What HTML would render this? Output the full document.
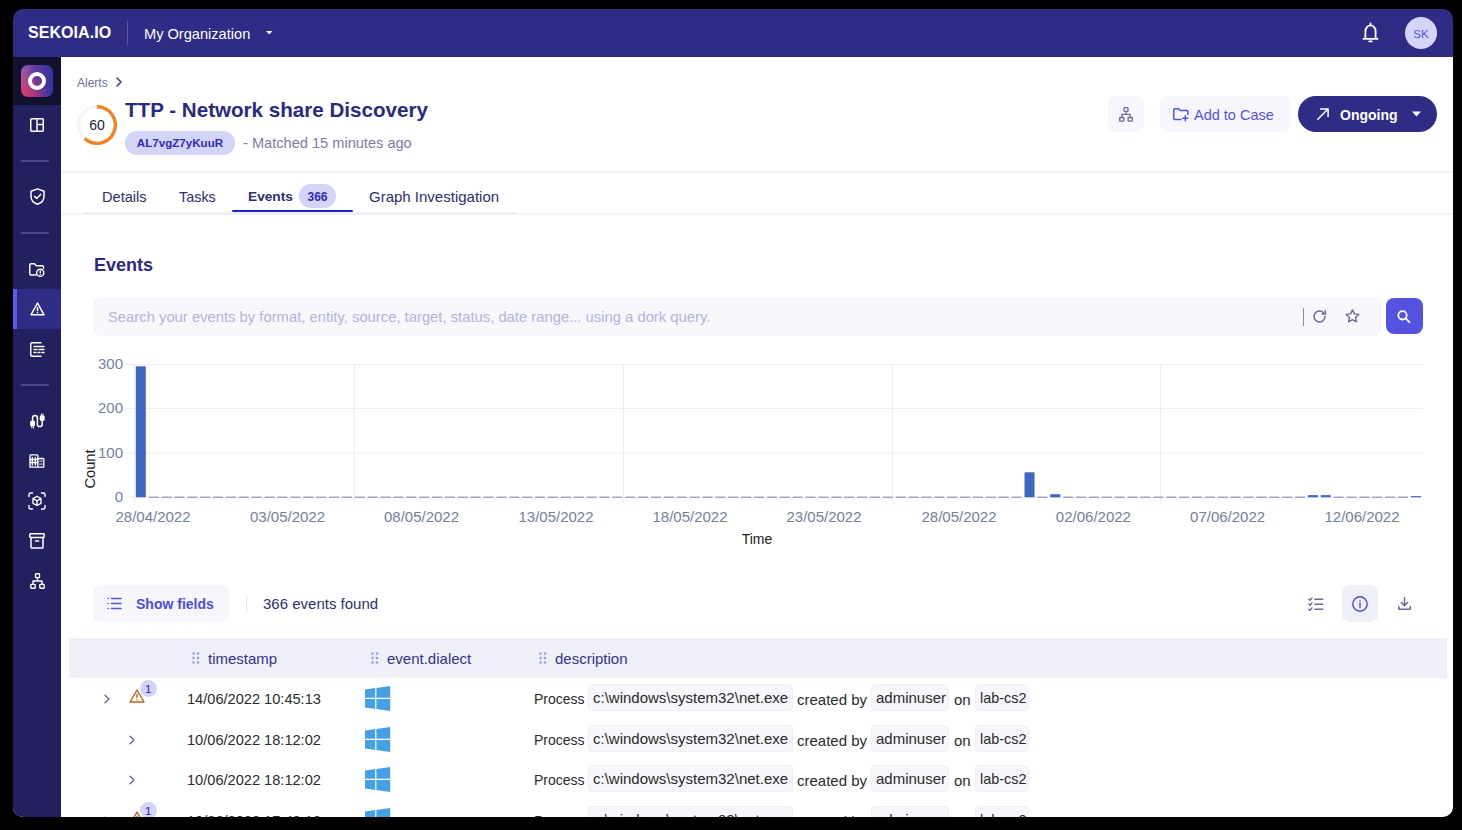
<!DOCTYPE html>
<html><head><meta charset="utf-8">
<style>
*{box-sizing:border-box;margin:0;padding:0}
html,body{width:1462px;height:830px;overflow:hidden;background:#000;font-family:"Liberation Sans",sans-serif}
.win{position:absolute;left:0;top:0;width:1462px;height:830px;background:transparent;clip-path:inset(9px 9px 13px 13px round 10px)}
.a{position:absolute}
.t{position:absolute;white-space:nowrap;line-height:1}
svg.i{position:absolute;overflow:visible;fill:none;stroke-linecap:round;stroke-linejoin:round}
.chip{position:absolute;height:27px;background:#f6f6fb;border:1px solid #efeff6;border-radius:4px;font-size:15px;color:#2a2a2a;line-height:26px;padding:0 4px;white-space:nowrap}
.rt{position:absolute;font-size:14px;color:#2b2b2b;white-space:nowrap;line-height:1}
</style></head><body>
<div class="win">
  <!-- top bar -->
  <div class="a" style="left:0;top:57px;width:1462px;height:773px;background:#fff"></div>
  <div class="a" style="left:0;top:0;width:1462px;height:57px;background:#2e2c84"></div>
  <div class="t" style="left:28px;top:25px;font-size:16px;font-weight:bold;color:#fff;letter-spacing:0.05px">SEKOIA.IO</div>
  <div class="a" style="left:127px;top:21px;width:1px;height:24px;background:#5a58a0"></div>
  <div class="t" style="left:144px;top:26.5px;font-size:14.6px;color:#fff">My Organization</div>
  <svg class="i" style="left:265.5px;top:31px" width="7" height="4"><path d="M0 0H6.5L3.25 3.6Z" style="fill:#fff;stroke:none"/></svg>
  <!-- bell -->
  <svg class="i" style="left:1362px;top:22px" width="17" height="21" stroke="#fff" stroke-width="1.6">
    <path d="M8.5 1.4V2.8M3.4 15.8V9.3C3.4 6 5.7 3.4 8.5 3.4S13.6 6 13.6 9.3V15.8M1.4 16.8H15.6M7.2 19.4H9.8" stroke-width="1.8"/>
  </svg>
  <div class="a" style="left:1405px;top:17px;width:32px;height:32px;border-radius:50%;background:#d4d4f7"></div>
  <div class="t" style="left:1405px;top:28px;width:32px;text-align:center;font-size:11.6px;color:#5452e0">SK</div>
  <!-- SIDEBAR -->
  <div class="a" style="left:0;top:57px;width:61px;height:773px;background:#22205f"></div>
  <div class="a" style="left:0;top:57px;width:61px;height:48px;background:#12112f"></div>
  <div class="a" style="left:21px;top:65px;width:32px;height:32px;border-radius:7px;background:radial-gradient(circle at 0% 100%,rgba(222,52,100,1) 0%,rgba(222,52,100,0) 62%),linear-gradient(90deg,#9c60b0 0%,#5e3a9a 45%,#3232a2 100%)"></div>
  <div class="a" style="left:28px;top:72px;width:18px;height:18px;border-radius:50%;border:4.3px solid #fff"></div>
  <div class="a" style="left:13px;top:289px;width:48px;height:40px;background:#2e2c84"></div>
  <div class="a" style="left:13px;top:289px;width:4px;height:40px;background:#5b5bf0"></div>
  <div class="a" style="left:21px;top:160px;width:28px;height:2px;background:#4a4886"></div>
  <div class="a" style="left:21px;top:232px;width:28px;height:2px;background:#4a4886"></div>
  <div class="a" style="left:21px;top:384px;width:28px;height:2px;background:#4a4886"></div>
  <!-- dashboard -->
  <svg class="i" style="left:30px;top:118px" width="14" height="14" stroke="#fff" stroke-width="1.5"><rect x="0.75" y="0.75" width="12.5" height="12.5" rx="1"/><path d="M7 0.75V13.25M7 6.5H13.25"/></svg>
  <!-- shield -->
  <svg class="i" style="left:30px;top:188px" width="15" height="17" stroke="#fff" stroke-width="1.5"><path d="M7.5 0.9L1 3.3V8.2C1 12 3.8 15 7.5 16.2C11.2 15 14 12 14 8.2V3.3Z"/><path d="M4.6 8.4L6.7 10.5L10.6 6.4"/></svg>
  <!-- folder alert -->
  <svg class="i" style="left:29px;top:263px" width="16" height="14" stroke="#fff" stroke-width="1.4"><path d="M7 12H1.8C1.2 12 0.8 11.6 0.8 11V1.8C0.8 1.2 1.2 0.8 1.8 0.8H5.5L7.2 2.7H13.5C14.1 2.7 14.5 3.1 14.5 3.7V5.5"/><circle cx="11.2" cy="9.8" r="3.6"/><path d="M11.2 8V9.8M11.2 11.5V11.6"/></svg>
  <!-- alert triangle -->
  <svg class="i" style="left:30px;top:302px" width="15" height="14" stroke="#fff" stroke-width="1.5"><path d="M7.5 1L14 12.8H1Z"/><path d="M7.5 5.5V8.5M7.5 10.6V10.7"/></svg>
  <!-- report -->
  <svg class="i" style="left:30px;top:342px" width="15" height="15" stroke="#fff" stroke-width="1.4"><path d="M11 0.8H1.8C1.2 0.8 0.8 1.2 0.8 1.8V13.2C0.8 13.8 1.2 14.2 1.8 14.2H11"/><path d="M4 4.5H14M4 7.5H7M9 7.5H14M4 10.5H6M8 10.5H10M12 10.5H14"/></svg>
  <!-- plug -->
  <svg class="i" style="left:30px;top:413px" width="15" height="16" stroke="#fff" stroke-width="1.5"><path d="M2.6 9V4.8A2.4 2.4 0 0 1 7.4 4.8V11.2A2.4 2.4 0 0 0 12.2 11.2V7"/><rect x="0.9" y="8.6" width="3.4" height="4" rx="0.4" style="fill:#fff"/><rect x="10.5" y="3.2" width="3.4" height="4" rx="0.4" style="fill:#fff"/><path d="M1.8 12.8V15M3.4 12.8V15M11.4 1V3.2M13 1V3.2" stroke-width="1"/></svg>
  <!-- building -->
  <svg class="i" style="left:29px;top:454px" width="16" height="14" stroke="#fff" stroke-width="1.3"><path d="M1 13.2V1.5C1 1 1.3 0.8 1.8 0.8H8C8.5 0.8 8.8 1 8.8 1.5V13.2M8.8 4.5H14C14.5 4.5 14.8 4.8 14.8 5.3V13.2H1"/><path d="M3.3 3.5V11M6.3 3.5V11M1 5.5H8.8M1 8.5H8.8M11 7V7.2M12.8 7V7.2M11 10V10.2M12.8 10V10.2"/></svg>
  <!-- cube scan -->
  <svg class="i" style="left:28px;top:492px" width="18" height="18" stroke="#fff" stroke-width="1.4"><path d="M1 4.5V2.5C1 1.6 1.6 1 2.5 1H4.5M13.5 1H15.5C16.4 1 17 1.6 17 2.5V4.5M17 13.5V15.5C17 16.4 16.4 17 15.5 17H13.5M4.5 17H2.5C1.6 17 1 16.4 1 15.5V13.5"/><path d="M9 4.3L13 6.5V11.3L9 13.5L5 11.3V6.5Z M5 6.5L9 8.8L13 6.5M9 8.8V13.5"/></svg>
  <!-- archive -->
  <svg class="i" style="left:29px;top:533px" width="16" height="16" stroke="#fff" stroke-width="1.5"><rect x="0.8" y="0.8" width="14.4" height="3.6" rx="0.8"/><path d="M2 4.4V14.2C2 14.7 2.3 15 2.8 15H13.2C13.7 15 14 14.7 14 14.2V4.4M6.5 8H9.5"/></svg>
  <!-- hierarchy -->
  <svg class="i" style="left:30px;top:573px" width="15" height="16" stroke="#fff" stroke-width="1.4"><rect x="5.5" y="0.8" width="4" height="3.8" rx="0.6"/><rect x="0.8" y="11.4" width="4.4" height="3.8" rx="0.6"/><rect x="9.8" y="11.4" width="4.4" height="3.8" rx="0.6"/><path d="M7.5 4.6V8M3 11.4V8H12V11.4"/></svg>
  <!-- HEADER -->
  <div class="t" style="left:77px;top:77px;font-size:12px;color:#6e6e9c">Alerts</div>
  <svg class="i" style="left:116px;top:77px" width="6" height="10" stroke="#3a3a7a" stroke-width="1.5"><path d="M1 1L5 5L1 9"/></svg>
  <svg class="i" style="left:77px;top:105px" width="40" height="40">
    <circle cx="20" cy="20" r="18.3" stroke="#f4f4fa" stroke-width="3.2"/>
    <path d="M20 1.7A18.3 18.3 0 1 1 7.76 33.6" stroke="#f5821f" stroke-width="3.4" stroke-linecap="butt"/>
  </svg>
  <div class="t" style="left:77px;top:118px;width:40px;text-align:center;font-size:14px;color:#1a1a3a">60</div>
  <div class="t" style="left:125px;top:100px;font-size:20.6px;font-weight:bold;color:#2b2a82">TTP - Network share Discovery</div>
  <div class="a" style="left:125px;top:131px;width:110px;height:24px;border-radius:12px;background:#d4d4f7"></div>
  <div class="t" style="left:125px;top:137px;width:110px;text-align:center;font-size:11.6px;color:#2d2db5;font-weight:bold">AL7vgZ7yKuuR</div>
  <div class="t" style="left:243px;top:136px;font-size:14.6px;color:#7c7ca6">- Matched 15 minutes ago</div>
  <!-- buttons -->
  <div class="a" style="left:1108px;top:96px;width:36px;height:36px;border-radius:8px;background:#f6f6fc"></div>
  <svg class="i" style="left:1119px;top:107px" width="14" height="16" stroke="#6b6b9a" stroke-width="1.3"><rect x="5" y="0.7" width="4" height="3.6" rx="0.6"/><rect x="0.7" y="10.5" width="4.2" height="3.6" rx="0.6"/><rect x="9.1" y="10.5" width="4.2" height="3.6" rx="0.6"/><path d="M7 4.3V7.4M2.8 10.5V7.4H11.2V10.5"/></svg>
  <div class="a" style="left:1160px;top:96px;width:130px;height:36px;border-radius:8px;background:#f6f6fc"></div>
  <svg class="i" style="left:1173px;top:108px" width="16" height="13" stroke="#5452e0" stroke-width="1.5"><path d="M8 11.5H1.8C1.2 11.5 0.8 11.1 0.8 10.5V1.6C0.8 1.1 1.2 0.8 1.6 0.8H5.6L7.2 2.6H14C14.6 2.6 14.9 3 14.9 3.5V6.5"/><path d="M12.3 7.8V12.8M9.8 10.3H14.8"/></svg>
  <div class="t" style="left:1194px;top:107.5px;font-size:14.5px;color:#5452e0">Add to Case</div>
  <div class="a" style="left:1298px;top:96px;width:139px;height:36px;border-radius:18px;background:#2e2c84"></div>
  <svg class="i" style="left:1317px;top:108px" width="12" height="12" stroke="#fff" stroke-width="1.5"><path d="M0.8 11.2L11 1M3.5 0.9H11.1V8.5"/></svg>
  <div class="t" style="left:1340px;top:108px;font-size:14px;color:#fff;font-weight:bold">Ongoing</div>
  <svg class="i" style="left:1412px;top:111px" width="9" height="6"><path d="M0 0.5H9L4.5 5.5Z" fill="#fff" stroke="none"/></svg>
  <div class="a" style="left:61px;top:171px;width:1392px;height:2px;background:#f3f3f9"></div>
  <!-- tabs band -->
  <div class="a" style="left:61px;top:173px;width:1392px;height:40px;background:#fff"></div>
  <div class="a" style="left:61px;top:213px;width:1392px;height:2px;background:#f3f3f9"></div>
  <div class="a" style="left:85px;top:212px;width:430px;height:2px;background:#eeeef7"></div>
  <div class="t" style="left:102px;top:190px;font-size:14.6px;color:#2e2e6e">Details</div>
  <div class="t" style="left:179px;top:190px;font-size:14.4px;color:#2e2e6e">Tasks</div>
  <div class="t" style="left:248px;top:190px;font-size:13.7px;color:#2e2e6e;font-weight:bold">Events</div>
  <div class="a" style="left:299px;top:184px;width:37px;height:24px;border-radius:12px;background:#d4d4f7"></div>
  <div class="t" style="left:299px;top:191px;width:37px;text-align:center;font-size:12px;color:#2d2db5;font-weight:bold">366</div>
  <div class="a" style="left:232px;top:210px;width:121px;height:2.3px;border-radius:1px;background:#2222cc"></div>
  <div class="t" style="left:369px;top:189px;font-size:15px;color:#2e2e6e">Graph Investigation</div>
  <!-- events heading -->
  <div class="t" style="left:94px;top:256px;font-size:18px;font-weight:bold;color:#2b2a80">Events</div>
  <!-- search -->
  <div class="a" style="left:93px;top:297px;width:1289px;height:39px;border-radius:8px;background:#f7f7fc"></div>
  <div class="t" style="left:108px;top:310px;font-size:14.8px;color:#b4b4dc">Search your events by format, entity, source, target, status, date range... using a dork query.</div>
  <div class="a" style="left:1303px;top:308px;width:1px;height:18px;background:#8a8ab0"></div>
  <svg class="i" style="left:1313px;top:310px" width="14" height="13" stroke="#6b6b9a" stroke-width="1.5"><path d="M12 6.5A5.5 5.5 0 1 1 10.4 2.6"/><path d="M12.3 0.8V4H9.1" /></svg>
  <svg class="i" style="left:1345px;top:309px" width="15" height="14" stroke="#6b6b9a" stroke-width="1.4"><path d="M7.5 0.9L9.4 4.9L13.8 5.4L10.5 8.4L11.4 12.8L7.5 10.6L3.6 12.8L4.5 8.4L1.2 5.4L5.6 4.9Z"/></svg>
  <div class="a" style="left:1386px;top:298px;width:37px;height:36px;border-radius:8px;background:#5452e0"></div>
  <svg class="i" style="left:1397px;top:310px" width="14" height="13" stroke="#fff" stroke-width="1.8"><circle cx="5.5" cy="5.3" r="4.2"/><path d="M8.6 8.4L12.5 12.2"/></svg>
  <!-- CHART -->
  <svg class="i" style="left:0;top:0" width="1462" height="830">
    <g stroke="#ececf2" stroke-width="1" stroke-linecap="butt">
      <path d="M126 364.5H1422.5M126 408.5H1422.5M126 453H1422.5M126 497.2H1422.5"/>
      <path d="M134.5 364V505M354.5 364V505M623.5 364V505M892.5 364V505M1160.5 364V505"/>
    </g>
    <rect x="135.80" y="366.30" width="10" height="131.00" fill="#3e67c4"/>
<rect x="148.68" y="496.6" width="10" height="1.3" fill="#9e9ab6"/>
<rect x="161.56" y="496.6" width="10" height="1.3" fill="#9e9ab6"/>
<rect x="174.44" y="496.6" width="10" height="1.3" fill="#9e9ab6"/>
<rect x="187.32" y="496.6" width="10" height="1.3" fill="#9e9ab6"/>
<rect x="200.20" y="496.6" width="10" height="1.3" fill="#9e9ab6"/>
<rect x="213.08" y="496.6" width="10" height="1.3" fill="#9e9ab6"/>
<rect x="225.96" y="496.6" width="10" height="1.3" fill="#9e9ab6"/>
<rect x="238.84" y="496.6" width="10" height="1.3" fill="#9e9ab6"/>
<rect x="251.72" y="496.6" width="10" height="1.3" fill="#9e9ab6"/>
<rect x="264.60" y="496.6" width="10" height="1.3" fill="#9e9ab6"/>
<rect x="277.48" y="496.6" width="10" height="1.3" fill="#9e9ab6"/>
<rect x="290.36" y="496.6" width="10" height="1.3" fill="#9e9ab6"/>
<rect x="303.24" y="496.6" width="10" height="1.3" fill="#9e9ab6"/>
<rect x="316.12" y="496.6" width="10" height="1.3" fill="#9e9ab6"/>
<rect x="329.00" y="496.6" width="10" height="1.3" fill="#9e9ab6"/>
<rect x="341.88" y="496.6" width="10" height="1.3" fill="#9e9ab6"/>
<rect x="354.76" y="496.6" width="10" height="1.3" fill="#9e9ab6"/>
<rect x="367.64" y="496.6" width="10" height="1.3" fill="#9e9ab6"/>
<rect x="380.52" y="496.6" width="10" height="1.3" fill="#9e9ab6"/>
<rect x="393.40" y="496.6" width="10" height="1.3" fill="#9e9ab6"/>
<rect x="406.28" y="496.6" width="10" height="1.3" fill="#9e9ab6"/>
<rect x="419.16" y="496.6" width="10" height="1.3" fill="#9e9ab6"/>
<rect x="432.04" y="496.6" width="10" height="1.3" fill="#9e9ab6"/>
<rect x="444.92" y="496.6" width="10" height="1.3" fill="#9e9ab6"/>
<rect x="457.80" y="496.6" width="10" height="1.3" fill="#9e9ab6"/>
<rect x="470.68" y="496.6" width="10" height="1.3" fill="#9e9ab6"/>
<rect x="483.56" y="496.6" width="10" height="1.3" fill="#9e9ab6"/>
<rect x="496.44" y="496.6" width="10" height="1.3" fill="#9e9ab6"/>
<rect x="509.32" y="496.6" width="10" height="1.3" fill="#9e9ab6"/>
<rect x="522.20" y="496.6" width="10" height="1.3" fill="#9e9ab6"/>
<rect x="535.08" y="496.6" width="10" height="1.3" fill="#9e9ab6"/>
<rect x="547.96" y="496.6" width="10" height="1.3" fill="#9e9ab6"/>
<rect x="560.84" y="496.6" width="10" height="1.3" fill="#9e9ab6"/>
<rect x="573.72" y="496.6" width="10" height="1.3" fill="#9e9ab6"/>
<rect x="586.60" y="496.6" width="10" height="1.3" fill="#9e9ab6"/>
<rect x="599.48" y="496.6" width="10" height="1.3" fill="#9e9ab6"/>
<rect x="612.36" y="496.6" width="10" height="1.3" fill="#9e9ab6"/>
<rect x="625.24" y="496.6" width="10" height="1.3" fill="#9e9ab6"/>
<rect x="638.12" y="496.6" width="10" height="1.3" fill="#9e9ab6"/>
<rect x="651.00" y="496.6" width="10" height="1.3" fill="#9e9ab6"/>
<rect x="663.88" y="496.6" width="10" height="1.3" fill="#9e9ab6"/>
<rect x="676.76" y="496.6" width="10" height="1.3" fill="#9e9ab6"/>
<rect x="689.64" y="496.6" width="10" height="1.3" fill="#9e9ab6"/>
<rect x="702.52" y="496.6" width="10" height="1.3" fill="#9e9ab6"/>
<rect x="715.40" y="496.6" width="10" height="1.3" fill="#9e9ab6"/>
<rect x="728.28" y="496.6" width="10" height="1.3" fill="#9e9ab6"/>
<rect x="741.16" y="496.6" width="10" height="1.3" fill="#9e9ab6"/>
<rect x="754.04" y="496.6" width="10" height="1.3" fill="#9e9ab6"/>
<rect x="766.92" y="496.6" width="10" height="1.3" fill="#9e9ab6"/>
<rect x="779.80" y="496.6" width="10" height="1.3" fill="#9e9ab6"/>
<rect x="792.68" y="496.6" width="10" height="1.3" fill="#9e9ab6"/>
<rect x="805.56" y="496.6" width="10" height="1.3" fill="#9e9ab6"/>
<rect x="818.44" y="496.6" width="10" height="1.3" fill="#9e9ab6"/>
<rect x="831.32" y="496.6" width="10" height="1.3" fill="#9e9ab6"/>
<rect x="844.20" y="496.6" width="10" height="1.3" fill="#9e9ab6"/>
<rect x="857.08" y="496.6" width="10" height="1.3" fill="#9e9ab6"/>
<rect x="869.96" y="496.6" width="10" height="1.3" fill="#9e9ab6"/>
<rect x="882.84" y="496.6" width="10" height="1.3" fill="#9e9ab6"/>
<rect x="895.72" y="496.6" width="10" height="1.3" fill="#9e9ab6"/>
<rect x="908.60" y="496.6" width="10" height="1.3" fill="#9e9ab6"/>
<rect x="921.48" y="496.6" width="10" height="1.3" fill="#9e9ab6"/>
<rect x="934.36" y="496.6" width="10" height="1.3" fill="#9e9ab6"/>
<rect x="947.24" y="496.6" width="10" height="1.3" fill="#9e9ab6"/>
<rect x="960.12" y="496.6" width="10" height="1.3" fill="#9e9ab6"/>
<rect x="973.00" y="496.6" width="10" height="1.3" fill="#9e9ab6"/>
<rect x="985.88" y="496.6" width="10" height="1.3" fill="#9e9ab6"/>
<rect x="998.76" y="496.6" width="10" height="1.3" fill="#9e9ab6"/>
<rect x="1011.64" y="496.6" width="10" height="1.3" fill="#9e9ab6"/>
<rect x="1024.52" y="472.30" width="10" height="25.00" fill="#3e67c4"/>
<rect x="1037.40" y="496.6" width="10" height="1.3" fill="#9e9ab6"/>
<rect x="1050.28" y="494.20" width="10" height="3.10" fill="#3e67c4"/>
<rect x="1063.16" y="496.6" width="10" height="1.3" fill="#9e9ab6"/>
<rect x="1076.04" y="496.6" width="10" height="1.3" fill="#9e9ab6"/>
<rect x="1088.92" y="496.6" width="10" height="1.3" fill="#9e9ab6"/>
<rect x="1101.80" y="496.6" width="10" height="1.3" fill="#9e9ab6"/>
<rect x="1114.68" y="496.6" width="10" height="1.3" fill="#9e9ab6"/>
<rect x="1127.56" y="496.6" width="10" height="1.3" fill="#9e9ab6"/>
<rect x="1140.44" y="496.6" width="10" height="1.3" fill="#9e9ab6"/>
<rect x="1153.32" y="496.6" width="10" height="1.3" fill="#9e9ab6"/>
<rect x="1166.20" y="496.6" width="10" height="1.3" fill="#9e9ab6"/>
<rect x="1179.08" y="496.6" width="10" height="1.3" fill="#9e9ab6"/>
<rect x="1191.96" y="496.6" width="10" height="1.3" fill="#9e9ab6"/>
<rect x="1204.84" y="496.6" width="10" height="1.3" fill="#9e9ab6"/>
<rect x="1217.72" y="496.6" width="10" height="1.3" fill="#9e9ab6"/>
<rect x="1230.60" y="496.6" width="10" height="1.3" fill="#9e9ab6"/>
<rect x="1243.48" y="496.6" width="10" height="1.3" fill="#9e9ab6"/>
<rect x="1256.36" y="496.6" width="10" height="1.3" fill="#9e9ab6"/>
<rect x="1269.24" y="496.6" width="10" height="1.3" fill="#9e9ab6"/>
<rect x="1282.12" y="496.6" width="10" height="1.3" fill="#9e9ab6"/>
<rect x="1295.00" y="496.6" width="10" height="1.3" fill="#9e9ab6"/>
<rect x="1307.88" y="495.10" width="10" height="2.20" fill="#3e67c4"/>
<rect x="1320.76" y="495.10" width="10" height="2.20" fill="#3e67c4"/>
<rect x="1333.64" y="496.6" width="10" height="1.3" fill="#9e9ab6"/>
<rect x="1346.52" y="496.6" width="10" height="1.3" fill="#9e9ab6"/>
<rect x="1359.40" y="496.6" width="10" height="1.3" fill="#9e9ab6"/>
<rect x="1372.28" y="496.6" width="10" height="1.3" fill="#9e9ab6"/>
<rect x="1385.16" y="496.6" width="10" height="1.3" fill="#9e9ab6"/>
<rect x="1398.04" y="496.6" width="10" height="1.3" fill="#9e9ab6"/>
<rect x="1410.92" y="496.10" width="10" height="1.20" fill="#3e67c4"/>
  </svg>
  <div class="t" style="left:86px;top:355.5px;width:37px;text-align:right;font-size:15px;color:#76819f">300</div>
  <div class="t" style="left:86px;top:399.5px;width:37px;text-align:right;font-size:15px;color:#76819f">200</div>
  <div class="t" style="left:86px;top:444.5px;width:37px;text-align:right;font-size:15px;color:#76819f">100</div>
  <div class="t" style="left:86px;top:488.5px;width:37px;text-align:right;font-size:15px;color:#76819f">0</div>
  <div class="t" style="left:60px;top:462px;width:60px;text-align:center;font-size:14.7px;color:#222;transform:rotate(-90deg);transform-origin:30px 7px">Count</div>
  <div class="t" style="left:707px;top:532px;width:100px;text-align:center;font-size:14px;color:#222">Time</div>
<div class="t" style="left:103px;top:508.5px;width:100px;text-align:center;font-size:15px;color:#74809e">28/04/2022</div>
<div class="t" style="left:237.5px;top:508.5px;width:100px;text-align:center;font-size:15px;color:#74809e">03/05/2022</div>
<div class="t" style="left:371.5px;top:508.5px;width:100px;text-align:center;font-size:15px;color:#74809e">08/05/2022</div>
<div class="t" style="left:506px;top:508.5px;width:100px;text-align:center;font-size:15px;color:#74809e">13/05/2022</div>
<div class="t" style="left:640px;top:508.5px;width:100px;text-align:center;font-size:15px;color:#74809e">18/05/2022</div>
<div class="t" style="left:774px;top:508.5px;width:100px;text-align:center;font-size:15px;color:#74809e">23/05/2022</div>
<div class="t" style="left:909px;top:508.5px;width:100px;text-align:center;font-size:15px;color:#74809e">28/05/2022</div>
<div class="t" style="left:1043.4px;top:508.5px;width:100px;text-align:center;font-size:15px;color:#74809e">02/06/2022</div>
<div class="t" style="left:1177.6px;top:508.5px;width:100px;text-align:center;font-size:15px;color:#74809e">07/06/2022</div>
<div class="t" style="left:1312px;top:508.5px;width:100px;text-align:center;font-size:15px;color:#74809e">12/06/2022</div>
  <!-- TOOLBAR -->
  <div class="a" style="left:93px;top:585px;width:136px;height:37px;border-radius:8px;background:#f6f6fc"></div>
  <svg class="i" style="left:107px;top:597px" width="15" height="13" stroke="#5452e0" stroke-width="1.5"><path d="M1 1.5H1.2M1 6.5H1.2M1 11.5H1.2M4.5 1.5H14M4.5 6.5H14M4.5 11.5H14"/></svg>
  <div class="t" style="left:136px;top:597px;font-size:14px;font-weight:bold;color:#4d4ddc">Show fields</div>
  <div class="a" style="left:246px;top:597px;width:1px;height:14px;background:#e2e2ee"></div>
  <div class="t" style="left:263px;top:596px;font-size:15px;color:#30306e">366 events found</div>
  <svg class="i" style="left:1308px;top:597px" width="16" height="14" stroke="#6b6b9a" stroke-width="1.4"><path d="M0.8 2.2L2 3.3L4 1M0.8 7.2L2 8.3L4 6M0.8 12.2L2 13.3L4 11M6.8 2.3H14.8M6.8 7.3H14.8M6.8 12.3H14.8"/></svg>
  <div class="a" style="left:1342px;top:585px;width:36px;height:37px;border-radius:8px;background:#efeff8"></div>
  <svg class="i" style="left:1352px;top:596px" width="16" height="16" stroke="#4b4be0" stroke-width="1.4"><circle cx="8" cy="8" r="7.2"/><path d="M8 7V11.5M8 4.6V4.8"/></svg>
  <svg class="i" style="left:1398px;top:597px" width="13" height="13" stroke="#6b6b9a" stroke-width="1.5"><path d="M6.5 0.8V8.5M3.3 5.5L6.5 8.6L9.7 5.5M0.8 9.5V12.2H12.2V9.5"/></svg>
  <!-- TABLE HEADER -->
  <div class="a" style="left:69px;top:638px;width:1378px;height:40px;background:#efeff8"></div>
  <svg class="i" style="left:192px;top:652px" width="8" height="12"><g style="fill:#9a9ade;stroke:none"><circle cx="1.5" cy="1.5" r="1.25"/><circle cx="1.5" cy="6" r="1.25"/><circle cx="1.5" cy="10.5" r="1.25"/><circle cx="6" cy="1.5" r="1.25"/><circle cx="6" cy="6" r="1.25"/><circle cx="6" cy="10.5" r="1.25"/></g></svg>
  <div class="t" style="left:208px;top:651px;font-size:15px;color:#34348a">timestamp</div>
  <svg class="i" style="left:371px;top:652px" width="8" height="12"><g style="fill:#9a9ade;stroke:none"><circle cx="1.5" cy="1.5" r="1.25"/><circle cx="1.5" cy="6" r="1.25"/><circle cx="1.5" cy="10.5" r="1.25"/><circle cx="6" cy="1.5" r="1.25"/><circle cx="6" cy="6" r="1.25"/><circle cx="6" cy="10.5" r="1.25"/></g></svg>
  <div class="t" style="left:387px;top:651px;font-size:15px;color:#34348a">event.dialect</div>
  <svg class="i" style="left:539px;top:652px" width="8" height="12"><g style="fill:#9a9ade;stroke:none"><circle cx="1.5" cy="1.5" r="1.25"/><circle cx="1.5" cy="6" r="1.25"/><circle cx="1.5" cy="10.5" r="1.25"/><circle cx="6" cy="1.5" r="1.25"/><circle cx="6" cy="6" r="1.25"/><circle cx="6" cy="10.5" r="1.25"/></g></svg>
  <div class="t" style="left:555px;top:651px;font-size:15px;color:#34348a">description</div>
  <svg class="i" style="left:104px;top:694px" width="6" height="10" stroke="#5d5da8" stroke-width="1.3"><path d="M1 1.2L5 5L1 8.8"/></svg>
  <svg class="i" style="left:129px;top:689px" width="16" height="14" stroke="#b5651d" stroke-width="1.4"><path d="M8 1L15 13H1Z"/><path d="M8 5.3V8.6M8 10.6V10.7"/></svg>
  <div class="a" style="left:139.5px;top:680px;width:17.5px;height:17px;border-radius:50%;background:#d4d4f7"></div>
  <div class="t" style="left:139.5px;top:684px;width:17.5px;text-align:center;font-size:11.5px;color:#2222c0">1</div>
  <div class="rt" style="left:187px;top:692px;font-size:14.6px">14/06/2022 10:45:13</div>
  <svg class="i" style="left:365px;top:686px" width="26" height="26"><path style="fill:#45a0e6;stroke:none" d="M0 3.5L10.2 2.1V11.8H0ZM11.4 1.9L25.2 0V11.8H11.4ZM0 13H10.2V22.9L0 21.5ZM11.4 13H25.2V25L11.4 23.1Z"/></svg>
  <div class="rt" style="left:534px;top:692px;font-size:14px">Process</div>
  <div class="chip" style="left:588px;top:684px;width:205px">c:\windows\system32\net.exe</div>
  <div class="rt" style="left:797px;top:692px;font-size:15px">created by</div>
  <div class="chip" style="left:871px;top:684px;width:78px">adminuser</div>
  <div class="rt" style="left:954px;top:692px;font-size:15px">on</div>
  <div class="chip" style="left:975px;top:684px;width:54px;font-size:14.4px">lab-cs2</div>
  <svg class="i" style="left:129px;top:734.67px" width="6" height="10" stroke="#5d5da8" stroke-width="1.3"><path d="M1 1.2L5 5L1 8.8"/></svg>
  <div class="rt" style="left:187px;top:732.67px;font-size:14.6px">10/06/2022 18:12:02</div>
  <svg class="i" style="left:365px;top:726.67px" width="26" height="26"><path style="fill:#45a0e6;stroke:none" d="M0 3.5L10.2 2.1V11.8H0ZM11.4 1.9L25.2 0V11.8H11.4ZM0 13H10.2V22.9L0 21.5ZM11.4 13H25.2V25L11.4 23.1Z"/></svg>
  <div class="rt" style="left:534px;top:732.67px;font-size:14px">Process</div>
  <div class="chip" style="left:588px;top:724.67px;width:205px">c:\windows\system32\net.exe</div>
  <div class="rt" style="left:797px;top:732.67px;font-size:15px">created by</div>
  <div class="chip" style="left:871px;top:724.67px;width:78px">adminuser</div>
  <div class="rt" style="left:954px;top:732.67px;font-size:15px">on</div>
  <div class="chip" style="left:975px;top:724.67px;width:54px;font-size:14.4px">lab-cs2</div>
  <svg class="i" style="left:129px;top:775.33px" width="6" height="10" stroke="#5d5da8" stroke-width="1.3"><path d="M1 1.2L5 5L1 8.8"/></svg>
  <div class="rt" style="left:187px;top:773.33px;font-size:14.6px">10/06/2022 18:12:02</div>
  <svg class="i" style="left:365px;top:767.33px" width="26" height="26"><path style="fill:#45a0e6;stroke:none" d="M0 3.5L10.2 2.1V11.8H0ZM11.4 1.9L25.2 0V11.8H11.4ZM0 13H10.2V22.9L0 21.5ZM11.4 13H25.2V25L11.4 23.1Z"/></svg>
  <div class="rt" style="left:534px;top:773.33px;font-size:14px">Process</div>
  <div class="chip" style="left:588px;top:765.33px;width:205px">c:\windows\system32\net.exe</div>
  <div class="rt" style="left:797px;top:773.33px;font-size:15px">created by</div>
  <div class="chip" style="left:871px;top:765.33px;width:78px">adminuser</div>
  <div class="rt" style="left:954px;top:773.33px;font-size:15px">on</div>
  <div class="chip" style="left:975px;top:765.33px;width:54px;font-size:14.4px">lab-cs2</div>
  <svg class="i" style="left:104px;top:816px" width="6" height="10" stroke="#5d5da8" stroke-width="1.3"><path d="M1 1.2L5 5L1 8.8"/></svg>
  <svg class="i" style="left:129px;top:811px" width="16" height="14" stroke="#b5651d" stroke-width="1.4"><path d="M8 1L15 13H1Z"/><path d="M8 5.3V8.6M8 10.6V10.7"/></svg>
  <div class="a" style="left:139.5px;top:802px;width:17.5px;height:17px;border-radius:50%;background:#d4d4f7"></div>
  <div class="t" style="left:139.5px;top:806px;width:17.5px;text-align:center;font-size:11.5px;color:#2222c0">1</div>
  <div class="rt" style="left:187px;top:814px;font-size:14.6px">10/06/2022 17:48:16</div>
  <svg class="i" style="left:365px;top:808px" width="26" height="26"><path style="fill:#45a0e6;stroke:none" d="M0 3.5L10.2 2.1V11.8H0ZM11.4 1.9L25.2 0V11.8H11.4ZM0 13H10.2V22.9L0 21.5ZM11.4 13H25.2V25L11.4 23.1Z"/></svg>
  <div class="rt" style="left:534px;top:814px;font-size:14px">Process</div>
  <div class="chip" style="left:588px;top:806px;width:205px">c:\windows\system32\net.exe</div>
  <div class="rt" style="left:797px;top:814px;font-size:15px">created by</div>
  <div class="chip" style="left:871px;top:806px;width:78px">adminuser</div>
  <div class="rt" style="left:954px;top:814px;font-size:15px">on</div>
  <div class="chip" style="left:975px;top:806px;width:54px;font-size:14.4px">lab-cs2</div>
</div></body></html>
